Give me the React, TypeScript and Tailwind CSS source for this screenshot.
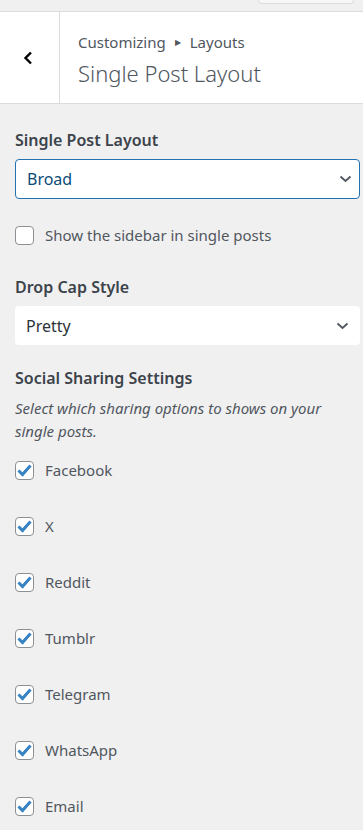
const shares = ["Facebook", "X", "Reddit", "Tumblr", "Telegram", "WhatsApp", "Email"];

function Chevron() {
	return (
		<svg width="13" height="8" viewBox="0 0 13 8" fill="none">
			<path d="M1.5 1.5 L6.5 6 L11.5 1.5" stroke="#50575e" strokeWidth="1.8" />
		</svg>
	);
}

function Check({ checked, label }: { checked?: boolean; label: string }) {
	return (
		<div className="flex items-center gap-[11px] h-[19px]">
			<div className="w-[19px] h-[19px] rounded-[4px] border border-[#8c8f94] bg-white flex items-center justify-center shrink-0">
				{checked && (
					<svg width="15" height="13" viewBox="0 0 15 13" fill="none">
						<path d="M1.5 6.5 L5.5 10.5 L13.5 1.5" stroke="#3582c4" strokeWidth="3" />
					</svg>
				)}
			</div>
			<span className="text-[15px] leading-[19px] text-[#50575e]">{label}</span>
		</div>
	);
}

export default function App() {
	return (
		<div className="w-[363px] h-[830px] overflow-hidden bg-[#f0f0f1] font-['Noto_Sans',sans-serif] text-[#1d2327]">
			<div className="h-[12px] border-b border-[#dcdcde] flex justify-end pr-[9px]">
				<div className="w-[96px] h-[4px] border border-t-0 border-[#dcdcde] rounded-b-[4px] bg-[#f6f7f7]" />
			</div>
			<div className="h-[92px] bg-white border-b border-[#dcdcde] flex">
				<div className="w-[60px] border-r border-[#dcdcde] flex items-center justify-center pr-[4px]">
					<svg width="12" height="14" viewBox="0 0 12 14" fill="none">
						<path d="M9 1.5 L3.5 7 L9 12.5" stroke="#000" strokeWidth="2.4" />
					</svg>
				</div>
				<div className="pl-[18px] pt-[19px]">
					<div className="flex items-center gap-[9px] text-[15px] text-[#50575e] leading-[22px]">
						<span>Customizing</span>
						<span className="text-[8px]">▶</span>
						<span>Layouts</span>
					</div>
					<div className="text-[22px] font-light text-[#50575e] leading-[30px] mt-[5px]">Single Post Layout</div>
				</div>
			</div>
			<div className="px-[15px] pt-[24px]">
				<div className="text-[16px] font-semibold text-[#3c434a] leading-[24px]">Single Post Layout</div>
				<div className="mt-[7px] h-[40px] w-[345px] rounded-[4px] border border-[#2271b1] bg-white flex items-center justify-between pl-[11px] pr-[7px]">
					<span className="text-[16px] text-[#0a4b78]">Broad</span>
					<Chevron />
				</div>
				<div className="mt-[27px]">
					<Check label="Show the sidebar in single posts" />
				</div>
				<div className="mt-[30px] text-[16px] font-semibold text-[#3c434a] leading-[24px]">Drop Cap Style</div>
				<div className="mt-[7px] h-[39px] w-[345px] rounded-[4px] bg-white flex items-center justify-between pl-[11px] pr-[11px]">
					<span className="text-[16px] text-[#2c3338]">Pretty</span>
					<Chevron />
				</div>
				<div className="mt-[21px] text-[16px] font-semibold text-[#3c434a] leading-[24px]">Social Sharing Settings</div>
				<div className="mt-[7px] text-[15px] italic text-[#50575e] leading-[23px] pr-[8px]">
					Select which sharing options to shows on your single posts.
				</div>
				<div className="mt-[18px] flex flex-col gap-[37px]">
					{shares.map((s) => (
						<Check key={s} checked label={s} />
					))}
				</div>
			</div>
		</div>
	);
}
